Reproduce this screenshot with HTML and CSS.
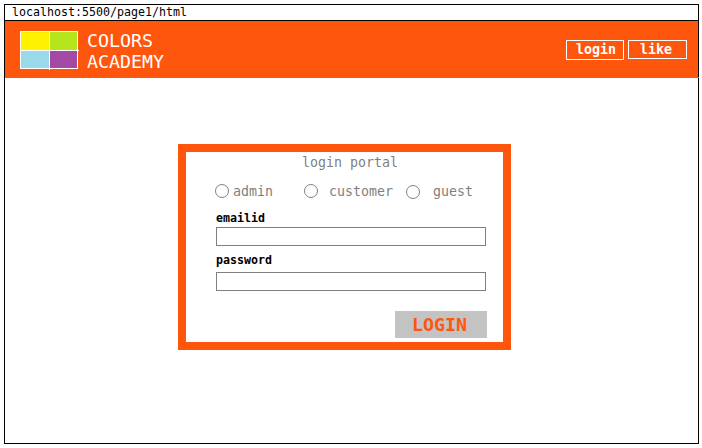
FILE: index.html
```html
<!DOCTYPE html>
<html lang="en">
<head>
<meta charset="utf-8">
<title>Colors Academy</title>
<link rel="stylesheet" href="styles.css">
</head>
<body>
<div class="window">
  <div class="address">localhost:5500/page1/html</div>
  <header class="header">
    <svg class="logo" width="59" height="39" viewBox="0 0 59 39" shape-rendering="crispEdges">
      <path fill="#fff200" d="M1 1h28v18H1z"/>
      <path fill="#b5e61d" d="M30 1h27v18H30z"/>
      <path fill="#99d9ea" d="M1 20h28v17H1z"/>
      <path fill="#a349a4" d="M30 20h27v17H30z"/>
      <path fill="none" stroke="#fff" d="M.5 .5h57v37H.5zM29.5 0v39M0 19.5h59"/>
    </svg>
    <div class="brand">COLORS<br>ACADEMY</div>
    <nav class="nav">
      <button class="nav-button nav-login">login</button>
      <button class="nav-button nav-like">like</button>
    </nav>
  </header>
  <main class="main">
    <form class="card">
      <div class="title">login portal</div>
      <div class="roles">
        <label class="role role-admin"><input class="radio" type="radio" name="role">admin</label>
        <label class="role role-customer"><input class="radio" type="radio" name="role">customer</label>
        <label class="role role-guest"><input class="radio" type="radio" name="role">guest</label>
      </div>
      <label class="label" for="email">emailid</label>
      <input class="field" id="email" type="text">
      <label class="label label-password" for="password">password</label>
      <input class="field" id="password" type="password">
      <button class="submit" type="button">LOGIN</button>
    </form>
  </main>
</div>
</body>
</html>
```
FILE: styles.css
```css
* {
  box-sizing: border-box;
}

body {
  margin: 0;
  padding: 4px;
  background: #fff;
  font-family: "DejaVu Sans Mono", "Liberation Mono", monospace;
}

button,
input {
  margin: 0;
  padding: 0;
  border-radius: 0;
  font-family: inherit;
  appearance: none;
}

.window {
  width: 695px;
  height: 440px;
  border: 1px solid #000;
}

.address {
  height: 16px;
  padding-left: 7px;
  border-bottom: 1px solid #000;
  font-size: 11.63px;
  line-height: 15px;
}

.header {
  position: relative;
  display: flex;
  align-items: flex-start;
  height: 57px;
  padding: 10px 11px 0 15px;
  background: #ff560d;
  color: #fff;
}

/* bottom edge of the bar runs over the window border */
.header::after {
  content: "";
  position: absolute;
  right: -1px;
  bottom: 0;
  width: 1px;
  height: 1px;
  background: #ff560d;
}

.logo {
  display: block;
}

.brand {
  margin: -1px 0 0 8px;
  font-size: 18.27px;
  line-height: 21px;
}

.nav {
  display: flex;
  align-items: flex-start;
  gap: 4px;
  margin: 9px 0 0 auto;
}

.nav-button {
  border: 1px solid #fff;
  background: none;
  color: #fff;
  font-size: 13.29px;
  font-weight: bold;
  line-height: 17px;
  text-align: left;
}

.nav-login {
  width: 58px;
  height: 20px;
  padding: 0 0 1px 9px;
}

.nav-like {
  width: 59px;
  height: 19px;
  padding-left: 11px;
}

.main {
  padding: 66px 0 0 173px;
}

.card {
  display: flex;
  flex-direction: column;
  width: 333px;
  height: 206px;
  padding: 0 16px 0 30px;
  border: 8px solid #ff560d;
}

.title {
  padding-left: 86px;
  color: #7f7f7f;
  font-size: 13.29px;
  line-height: 21px;
}

.roles {
  display: flex;
  height: 38px;
  margin-left: -1px;
  padding-top: 11px;
  color: #7f7f7f;
  font-size: 13.29px;
  line-height: 15px;
}

.role {
  display: flex;
  align-items: flex-start;
}

.radio {
  width: 14px;
  height: 14px;
  border: 1px solid #7f7f7f;
  border-radius: 50%;
  background: #fff;
}

.role-admin {
  width: 89px;
  gap: 4px;
}

.role-customer {
  width: 102px;
  gap: 11px;
}

.role-guest {
  gap: 13px;
}

.role-guest .radio {
  margin-top: 1px;
}

.label {
  height: 16px;
  font-size: 11.63px;
  font-weight: bold;
  line-height: 14px;
}

.label-password {
  height: 19px;
  margin-top: 7px;
}

.field {
  width: 270px;
  height: 19px;
  border: 1px solid #7f7f7f;
  background: #fff;
}

.submit {
  align-self: flex-end;
  width: 92px;
  height: 27px;
  margin-top: 20px;
  padding-left: 17px;
  border: 0;
  background: #c3c3c3;
  color: #ff560d;
  font-size: 18.27px;
  font-weight: bold;
  line-height: 27px;
  text-align: left;
}
```
